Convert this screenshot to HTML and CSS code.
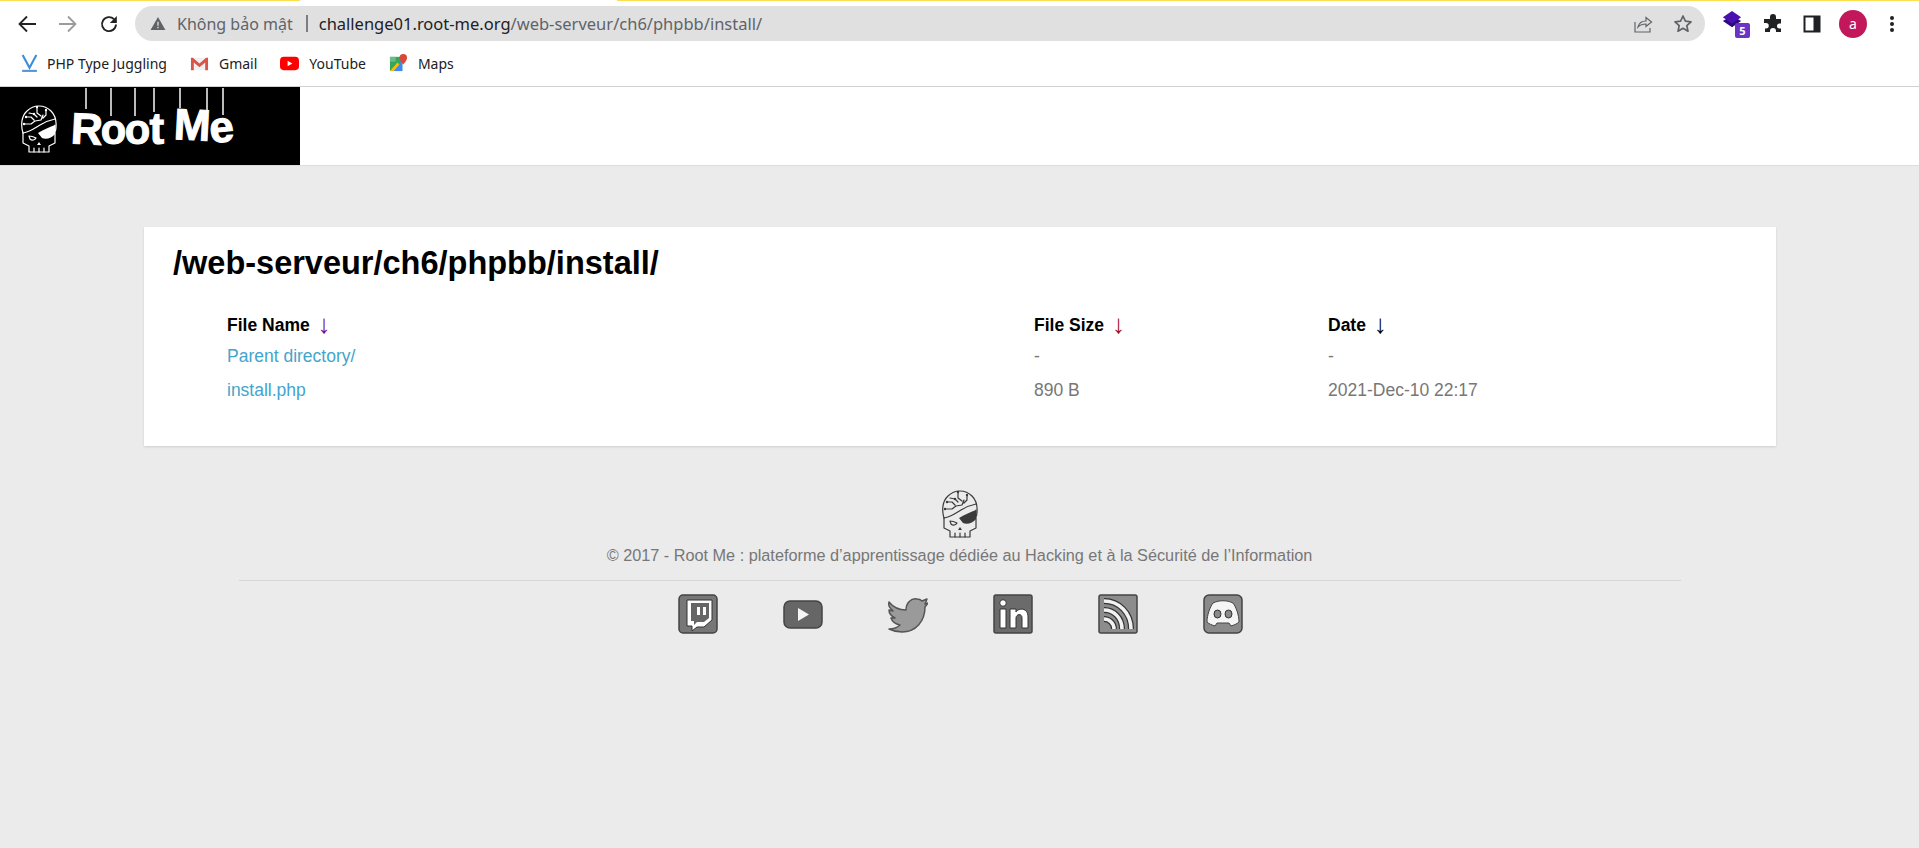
FILE: index.html
```html
<!DOCTYPE html>
<html lang="vi">
<head>
<meta charset="utf-8">
<title>Index of /web-serveur/ch6/phpbb/install/</title>
<link rel="stylesheet" href="styles.css">
</head>
<body>
<svg class="defs" width="0" height="0" aria-hidden="true">
  <defs>
    <symbol id="skull" viewBox="0 0 36 48">
      <g fill="none" stroke="currentColor" stroke-width="1.200" stroke-linejoin="round" stroke-linecap="round">
        <path d="M2 28C-.5 20 .5 11 6 6 10 2 14 1 18 1c5 0 9 2 12 5 5 5 6 12 4.500 20"/>
        <path d="M2 28C9 27 14 23 19 20c5-3 10-5 15-6"/>
        <path d="M2 28v10l6 3v6h20v-6l6-3V20"/>
        <path d="M13 47v-4M18 47v-4M23 47v-4"/>
        <path d="M5 12h5l3 3M8 8l5 1 3 3M3 19h7l4-3 6-1 2-5M16 2v6l4 3M25 5v5l-3 3"/>
        <path d="M8 31c3 0 5 1 7 2-1 2-4 3-6 1z"/>
      </g>
      <g fill="currentColor">
        <circle cx="13" cy="9" r="1.200"/><circle cx="5" cy="12" r="1.200"/><circle cx="3" cy="19" r="1.200"/><circle cx="25" cy="5" r="1.200"/><circle cx="16" cy="2" r="1.200"/>
        <path d="M17 28c5-3 11-6 17-8v9c-3 4-9 6-13 4zM18 37l2 3h-4z"/>
      </g>
    </symbol>
  </defs>
</svg>

<div class="load-strip"><i class="seg-a"></i><i class="seg-b"></i></div>

<nav class="toolbar">
  <div class="nav-buttons">
    <svg class="nav-ico" viewBox="0 0 20 20"><path d="M19 10H3M10 2.500 2.500 10l7.500 7.500" fill="none" stroke="#222" stroke-width="1.800"/></svg>
    <svg class="nav-ico" viewBox="0 0 20 20"><path d="M1 10h16M10 2.500l7.500 7.500-7.500 7.500" fill="none" stroke="#9b9b9b" stroke-width="1.800"/></svg>
    <svg class="nav-ico" viewBox="0 0 20 20"><path d="M17 10.500A7 7 0 1 1 15 5.200" fill="none" stroke="#222" stroke-width="1.900"/><path d="M17.800 2v7h-7z" fill="#222"/></svg>
  </div>
  <div class="omnibox">
    <svg class="warn" viewBox="0 0 16 14"><path d="M8 0 16 14H0z" fill="#5f6368"/><path d="M7.300 5h1.400v4.500H7.300zM7.300 10.500h1.400V12H7.300z" fill="#e0e0e0"/></svg>
    <span class="insecure">Không bảo mật</span>
    <span class="sep"></span>
    <span class="url"><span class="host">challenge01.root-me.org</span>/web-serveur/ch6/phpbb/install/</span>
    <svg class="omni-ico share" viewBox="0 0 20 20"><path d="M2 8v10h15v-4M5 13c1-4 4-6 8-6V3.500L18.500 8 13 12.500V10c-3 0-6 1-8 3z" fill="none" stroke="#5f6368" stroke-width="1.200"/></svg>
    <svg class="omni-ico" viewBox="0 0 20 20"><path d="m10 2 2.400 5.200 5.600.6-4.200 3.800 1.200 5.600-5-2.900-5 2.900 1.200-5.600L2 7.800l5.600-.6z" fill="none" stroke="#5f6368" stroke-width="1.700" stroke-linejoin="round"/></svg>
  </div>
  <div class="extensions">
    <span class="ext-stack">
      <svg class="ext-layers" viewBox="0 0 22 20"><path d="M1 11l10 7 10-7-10-6z" fill="#2a0a80"/><path d="M1 7l10-7 10 7-10 7z" fill="#4a10b0"/></svg>
      <span class="ext-badge">5</span>
    </span>
    <svg class="ext-ico ext-puzzle" viewBox="0 0 20 20"><path d="M7 3a3 3 0 0 1 6 0v2h5v4.500h-1.500a2.500 2.500 0 0 0 0 5H18V18h-5v-1a3 3 0 0 0-6 0v1H2v-3.500h1a2.700 2.700 0 0 0 0-5.500H1V5h6z" fill="#202124"/></svg>
    <svg class="ext-ico ext-panel" viewBox="0 0 20 20"><path fill="#202124" d="M1.500 1.500h17v17h-17zM3.500 3.500v13h8v-13z" fill-rule="evenodd"/></svg>
    <span class="avatar">a</span>
    <span class="kebab"><i></i><i></i><i></i></span>
  </div>
</nav>

<div class="bookmarks">
  <a class="bm">
    <svg viewBox="0 0 16 18"><path d="M1.500 1 8 13l6.500-12" fill="none" stroke="#3a8fd8" stroke-width="2"/><path d="M1 16h14" stroke="#5a93d8" stroke-width="2"/></svg>
    PHP Type Juggling
  </a>
  <a class="bm">
    <svg viewBox="0 0 20 16"><path d="M1 2h18v13H1z" fill="#f0f0f0"/><path d="M1 15V2h2l7 6 7-6h2v13h-3V7l-6 5-6-5v8z" fill="#d9534a"/></svg>
    Gmail
  </a>
  <a class="bm">
    <svg viewBox="0 0 20 16"><rect y="1" width="20" height="14" rx="4" fill="#f00"/><path d="m8 5 5 3-5 3z" fill="#fff"/></svg>
    YouTube
  </a>
  <a class="bm">
    <svg viewBox="0 0 20 20"><path d="M1 3h13v15H1z" fill="#34a853"/><path d="M1 18 14 6v12z" fill="#4285f4"/><path d="M1 18 9 9l2 2-6 7z" fill="#fbbc04"/><path d="M1 3h6v5H1z" fill="#6fb98f"/><path d="M15 0a4 4 0 0 1 4 4c0 3-4 7-4 7s-4-4-4-7a4 4 0 0 1 4-4z" fill="#d9483b"/></svg>
    Maps
  </a>
</div>

<header class="site-header">
  <div class="logo">
    <svg class="logo-skull"><use href="#skull"/></svg>
    <span class="strings"><i></i><i></i><i></i><i></i><i></i><i></i><i></i></span>
    <span class="logo-text"><b class="l-r">R</b><b class="l-o1">o</b><b class="l-o2">o</b><b class="l-t">t</b><b class="l-m">M</b><b class="l-e">e</b></span>
  </div>
</header>

<main class="page">
  <section class="card">
    <h1>/web-serveur/ch6/phpbb/install/</h1>
    <table class="listing">
      <thead>
        <tr>
          <th class="col-name">File Name <span class="arrow arrow-purple">↓</span></th>
          <th class="col-size">File Size <span class="arrow arrow-red">↓</span></th>
          <th>Date <span class="arrow">↓</span></th>
        </tr>
      </thead>
      <tbody>
        <tr><td><a href="#">Parent directory/</a></td><td>-</td><td>-</td></tr>
        <tr><td><a href="#">install.php</a></td><td>890 B</td><td>2021-Dec-10 22:17</td></tr>
      </tbody>
    </table>
  </section>

  <footer class="footer">
    <svg class="foot-skull"><use href="#skull"/></svg>
    <p class="copy">© 2017 - Root Me : plateforme d’apprentissage dédiée au Hacking et à la Sécurité de l’Information</p>
    <div class="social">
      <svg viewBox="0 0 40 40"><rect x="1" y="1" width="38" height="38" rx="4" fill="#777" stroke="#444" stroke-width="1.500"/><path d="M9 6h25v20l-8 7h-7l-5 4v-5H9z" fill="#fff" stroke="#333"/><path d="M13 9h18v15l-5 4h-7l-3 3v-4h-3z" fill="#666"/><path d="M19 13h3v8h-3zM25 13h3v8h-3z" fill="#fff"/></svg>
      <svg viewBox="0 0 40 40"><rect x="1" y="7" width="38" height="27" rx="6" fill="#666" stroke="#444" stroke-width="1.500"/><path d="m15 14 11 6.500L15 27z" fill="#f5f5f5"/></svg>
      <svg viewBox="0 0 40 40"><path d="M1 8c4 5 9 8 17 8 0-7 5-12 11-11 3 0 4 1 5 2l5-2-2 5 3-1-3 4c0 14-9 25-23 25-5 0-9-1-13-3 4 0 8-1 11-4-5-1-8-4-9-7h4c-4-2-6-5-6-8l4 1C2 14 0 12 1 8z" fill="#9a9a9a" stroke="#555" stroke-width="1.500" stroke-linejoin="round"/></svg>
      <svg viewBox="0 0 40 40"><rect x="1" y="1" width="38" height="38" rx="2" fill="#6b6b6b" stroke="#444" stroke-width="1.500"/><path d="M7 15h6v19H7zM17 15h6v3c2-4 12-5 12 5v11h-6V24c0-5-6-4-6 0v10h-6z" fill="#fff" stroke="#333"/><circle cx="10" cy="9" r="3.300" fill="#fff" stroke="#333"/></svg>
      <svg viewBox="0 0 40 40"><rect x="1" y="1" width="38" height="38" rx="2" fill="#8c8c8c" stroke="#444" stroke-width="1.500"/><g fill="none" stroke="#333" stroke-width="6"><path d="M6 7c15 0 27 12 27 28M6 16c10 0 18 8 18 19M6 25c5 0 10 4 10 10"/></g><g fill="none" stroke="#f2f2f2" stroke-width="3.600"><path d="M6 7c15 0 27 12 27 28M6 16c10 0 18 8 18 19M6 25c5 0 10 4 10 10"/></g></svg>
      <svg viewBox="0 0 40 40"><rect x="1" y="1" width="38" height="38" rx="5" fill="#8a8a8a" stroke="#444" stroke-width="1.500"/><path d="M10 9c6-3 14-3 20 0 3 4 6 12 6 19-2 2-5 3-8 4l-2-3H14l-2 3c-3-1-6-2-8-4 0-7 3-15 6-19z" fill="#f5f5f5" stroke="#444"/><ellipse cx="14.500" cy="20" rx="3.500" ry="4" fill="#8a8a8a" stroke="#333"/><ellipse cx="25.500" cy="20" rx="3.500" ry="4" fill="#8a8a8a" stroke="#333"/></svg>
    </div>
  </footer>
</main>
</body>
</html>
```

FILE: styles.css
```css
* { box-sizing: border-box; }

html, body { margin: 0; height: 100%; }

body {
  background: #ebebeb;
  font-family: "Liberation Sans", Arial, sans-serif;
  overflow: hidden;
}

.defs { position: absolute; }

/* browser chrome */
.load-strip { height: 1px; background: #fff; display: flex; }
.load-strip i { display: block; background: #fbdf4e; }
.seg-a { width: 300px; margin-right: 317px; }
.seg-b { flex: 1; }

.toolbar {
  height: 45px;
  background: #fff;
  display: flex;
  align-items: center;
  padding: 0 0 0 17px;
  font-family: "Noto Sans", "Open Sans", sans-serif;
}

.nav-buttons { display: flex; gap: 21px; width: 118px; align-items: center; }
.nav-ico { width: 20px; height: 20px; }

.omnibox {
  width: 1570px;
  height: 35px;
  background: #e0e0e0;
  border-radius: 18px;
  display: flex;
  align-items: center;
  padding: 0 12px 0 15px;
  font-size: 16.500px;
  white-space: nowrap;
}

.warn { width: 16px; height: 13px; margin-right: 11px; flex: none; }
.insecure { color: #5f6368; font-size: 16px; }
.sep { width: 2px; height: 17px; background: #7a7e82; margin: 0 11px 0 13px; }
.url { color: #5f6368; flex: 1; }
.host { color: #202124; }
.omni-ico { width: 20px; height: 20px; }
.share { margin-right: 20px; }

.extensions { display: flex; align-items: center; margin-left: 17px; }
.ext-stack { position: relative; width: 28px; height: 28px; margin-right: 13px; }
.ext-layers { width: 20px; height: 20px; position: absolute; left: 0; top: 0; }
.ext-badge {
  position: absolute;
  left: 13px;
  top: 13px;
  width: 15px;
  height: 15px;
  border-radius: 2px;
  background: #6a35c4;
  color: #fff;
  font-size: 11px;
  font-weight: 700;
  line-height: 15px;
  text-align: center;
}
.ext-ico { width: 20px; height: 20px; }
.ext-puzzle { margin-right: 19px; }
.ext-panel { margin-right: 17px; }
.avatar {
  width: 28px;
  height: 28px;
  border-radius: 50%;
  background: #c2185b;
  color: #fff;
  font-size: 14px;
  line-height: 27px;
  text-align: center;
  margin-right: 23px;
}
.kebab { display: flex; flex-direction: column; gap: 2px; }
.kebab i { width: 4px; height: 4px; border-radius: 50%; background: #202124; }

.bookmarks {
  height: 41px;
  background: #fff;
  border-bottom: 1px solid #d0d0d0;
  display: flex;
  align-items: center;
  padding: 0 0 5px 20px;
  gap: 23px;
  font-family: "Noto Sans", "Open Sans", sans-serif;
  font-size: 14px;
  color: #202124;
}

.bm { display: flex; align-items: center; gap: 10px; }
.bm:first-child { gap: 8px; }
.bm svg { width: 19px; height: 19px; }

/* site header */
.site-header {
  height: 79px;
  background: #fff;
  border-bottom: 1px solid #ddd;
}

.logo {
  position: relative;
  width: 300px;
  height: 78px;
  background: #000;
  color: #fff;
  display: flex;
  align-items: center;
  padding-left: 21px;
}

.logo-skull { width: 36px; height: 48px; margin-top: 6px; margin-right: 14px; flex: none; }

.logo-text {
  font-size: 44px;
  line-height: 1;
  margin-top: 6px;
  -webkit-text-stroke: 1px #fff;
  white-space: nowrap;
}

.logo-text b { display: inline-block; font-weight: 700; }
.l-r { transform: rotate(3deg); }
.l-o1 { margin-left: -3px; transform: translateY(1px) scale(.95); }
.l-o2 { margin-left: -3px; transform: translateY(1px) scale(.95); }
.l-t { margin-left: -1px; }
.l-m { margin-left: 10px; transform: translateY(-4px) rotate(3deg); }
.l-e { margin-left: -2px; transform: translateY(-2px) rotate(-6deg); }

.strings i { position: absolute; top: 1px; width: 2px; background: #bbb; }
.strings i:nth-child(1) { left: 85px; height: 21px; }
.strings i:nth-child(2) { left: 110px; height: 28px; }
.strings i:nth-child(3) { left: 134px; height: 28px; }
.strings i:nth-child(4) { left: 153px; height: 24px; }
.strings i:nth-child(5) { left: 179px; height: 20px; }
.strings i:nth-child(6) { left: 206px; height: 22px; }
.strings i:nth-child(7) { left: 222px; height: 27px; }

/* page */
.page { padding: 61px 143px 0 144px; }

.card {
  background: #fff;
  height: 219px;
  padding: 18px 29px 0;
  box-shadow: 0 1px 2px rgba(0, 0, 0, .12);
}

.card h1 {
  margin: 0 0 30px;
  font-size: 32.500px;
  line-height: 37px;
  font-weight: 700;
  color: #000;
}

.listing {
  border-collapse: collapse;
  margin-left: 54px;
  font-size: 17.500px;
  table-layout: fixed;
  width: 1400px;
}

.listing th { text-align: left; padding: 0; height: 27px; color: #000; font-size: 17.500px; }
.listing td { padding: 0; height: 34px; color: #777; }
.listing a { color: #43a5cc; text-decoration: none; }
.col-name { width: 807px; }
.col-size { width: 294px; }
.arrow { font-weight: 400; font-size: 26px; line-height: 0; margin-left: 3px; position: relative; top: 2px; }
.arrow-purple { color: #7a0c8a; }
.arrow-red { color: #a0101c; }

/* footer */
.footer { display: flex; flex-direction: column; align-items: center; padding-top: 44px; }
.foot-skull { width: 36px; height: 48px; color: #3a3a3a; }
.copy {
  margin: 8px 96px 0 95px;
  width: 1442px;
  text-align: center;
  font-size: 16.250px;
  line-height: 18px;
  padding-bottom: 16px;
  color: #777;
  border-bottom: 1px solid #d6d6d6;
}
.social { display: flex; gap: 65px; margin-top: 13px; }
.social svg { width: 40px; height: 40px; }
```
